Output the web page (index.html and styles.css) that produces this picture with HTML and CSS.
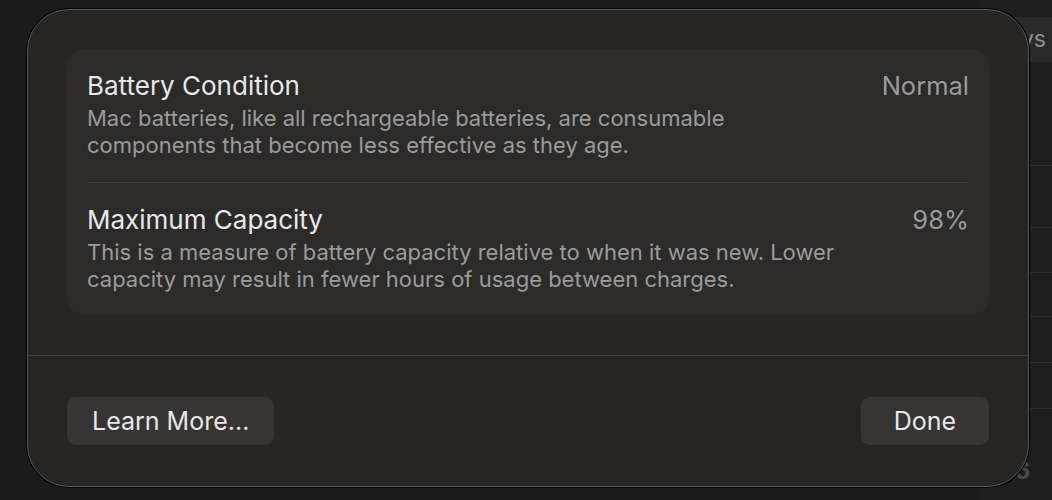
FILE: index.html
```html
<!DOCTYPE html>
<html lang="en">
<head>
    <meta charset="UTF-8">
    <meta name="viewport" content="width=device-width, initial-scale=1.0">
    <title>Battery Health</title>
    <link rel="stylesheet" href="styles.css">
</head>
<body>
    <!-- window behind the sheet -->
    <div class="backdrop">
        <div class="backdrop-head">ys</div>
        <div class="backdrop-row r1"></div>
        <div class="backdrop-row r2"></div>
        <div class="backdrop-row r3"></div>
        <div class="backdrop-row r4"></div>
        <div class="backdrop-row r5"></div>
        <div class="backdrop-row r6"></div>
        <div class="backdrop-foot">6</div>
    </div>

    <div class="stage">
        <div class="sheet">
            <div class="sheet-body">
                <div class="info-card">
                    <div class="info-row">
                        <div class="info-text">
                            <div class="info-title">Battery Condition</div>
                            <div class="info-desc">Mac batteries, like all rechargeable batteries, are consumable<br>components that become less effective as they age.</div>
                        </div>
                        <div class="info-value">Normal</div>
                    </div>
                    <div class="info-row">
                        <div class="info-text">
                            <div class="info-title">Maximum Capacity</div>
                            <div class="info-desc">This is a measure of battery capacity relative to when it was new. Lower<br>capacity may result in fewer hours of usage between charges.</div>
                        </div>
                        <div class="info-value">98%</div>
                    </div>
                </div>
            </div>
            <div class="sheet-footer">
                <button class="btn">Learn More...</button>
                <button class="btn btn-done">Done</button>
            </div>
        </div>
    </div>
</body>
</html>
```

FILE: styles.css
```css
* {
    margin: 0;
    padding: 0;
    box-sizing: border-box;
}

body {
    background-color: #1c1c1c;
    font-family: Inter, "Noto Sans", sans-serif;
    color: #e6e6e6;
    width: 1052px;
    height: 500px;
    overflow: hidden;
    position: relative;
}

/* 后面的窗口 */
.backdrop {
    position: absolute;
    left: 980px;
    top: 0;
    width: 72px;
    height: 500px;
    background-color: #1e1e1e;
}

.backdrop-head {
    margin-top: 17px;
    height: 45px;
    background-color: #2a2a2a;
    color: #8e8e8e;
    font-size: 23px;
    line-height: 45px;
    text-align: right;
    padding-right: 6px;
}

.backdrop-row {
    position: absolute;
    left: 0;
    right: 0;
    border-top: 1px solid #2f2e2d;
}

.r1 { top: 165px; }
.r2 { top: 227px; }
.r3 { top: 272px; }
.r4 { top: 316px; }
.r5 { top: 362px; }
.r6 { top: 408px; }

.backdrop-foot {
    position: absolute;
    top: 456px;
    right: 22px;
    color: #4a4a4a;
    font-size: 24px;
    font-weight: 700;
}

.stage {
    position: relative;
    padding: 9px 0 0 27px;
}

.sheet {
    width: 1002px;
    height: 478px;
    background-color: #282522;
    border: 1px solid #5b5855;
    border-radius: 42px;
    box-shadow: 0 0 0 1px #000;
    display: flex;
    flex-direction: column;
}

.sheet-body {
    padding: 39px 39px 40px;
    border-bottom: 1px solid #403d3a;
}

.info-card {
    background-color: #2c2b2a;
    border-radius: 18px;
    padding: 0 20px;
}

.info-row {
    display: flex;
    justify-content: space-between;
    height: 133px;
    padding-top: 22px;
}

.info-row + .info-row {
    border-top: 1px solid #3b3a39;
}

.info-title {
    font-size: 26px;
    line-height: 30px;
    color: #e8e8e8;
}

.info-desc {
    margin-top: 4px;
    font-size: 22px;
    line-height: 27px;
    color: #9c9b9a;
}

.info-value {
    font-size: 25.5px;
    line-height: 30px;
    color: #9c9b9a;
}

.sheet-footer {
    display: flex;
    justify-content: space-between;
    padding: 41px 39px 0;
}

.btn {
    height: 48px;
    padding: 0 25px;
    background-color: #363534;
    border: none;
    border-radius: 9px;
    color: #e8e8e8;
    font-family: Inter, "Noto Sans", sans-serif;
    font-size: 25px;
}

.btn-done {
    width: 128px;
}
```
